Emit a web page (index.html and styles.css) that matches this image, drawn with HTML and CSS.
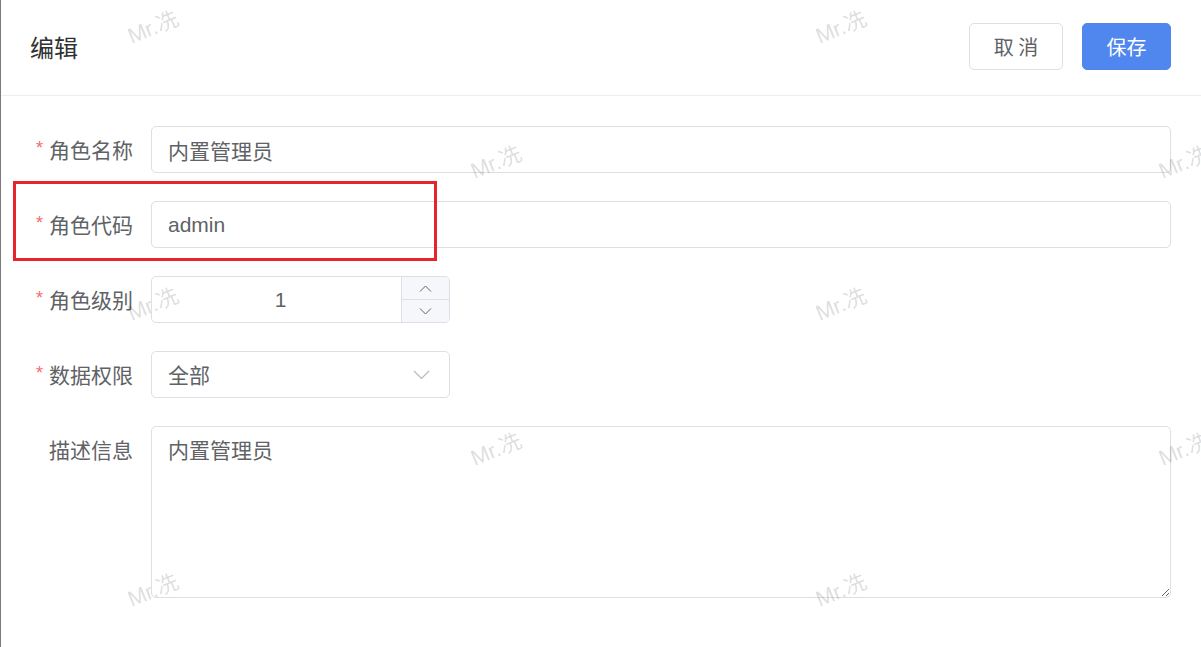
FILE: index.html
```html
<!DOCTYPE html>
<html lang="zh-CN">
<head>
<meta charset="utf-8">
<title>编辑</title>
<link rel="stylesheet" href="styles.css">
</head>
<body>
<div class="dialog">
  <div class="header">
    <div class="title">编辑</div>
    <div class="actions">
      <button class="btn btn-default">取 消</button>
      <button class="btn btn-primary">保存</button>
    </div>
  </div>
  <form class="form">
    <div class="row">
      <label class="label"><span class="req">*</span>角色名称</label>
      <div class="control"><input class="input" type="text" value="内置管理员"></div>
    </div>
    <div class="row">
      <label class="label"><span class="req">*</span>角色代码</label>
      <div class="control"><input class="input" type="text" value="admin"></div>
    </div>
    <div class="row">
      <label class="label"><span class="req">*</span>角色级别</label>
      <div class="control">
        <div class="number">
          <div class="number-value">1</div>
          <div class="stepper">
            <span class="step step-up">
              <svg width="13" height="7" viewBox="0 0 13 7"><path d="M1 6.5 L6.5 1 L12 6.5" fill="none" stroke="#606266" stroke-width="1"/></svg>
            </span>
            <span class="step step-down">
              <svg width="13" height="7" viewBox="0 0 13 7"><path d="M1 0.5 L6.5 6 L12 0.5" fill="none" stroke="#606266" stroke-width="1"/></svg>
            </span>
          </div>
        </div>
      </div>
    </div>
    <div class="row">
      <label class="label"><span class="req">*</span>数据权限</label>
      <div class="control">
        <div class="select">
          <span class="select-value">全部</span>
          <svg class="select-arrow" width="17" height="10" viewBox="0 0 17 10"><path d="M1 1 L8.5 8.5 L16 1" fill="none" stroke="#b4b8bf" stroke-width="1.2"/></svg>
        </div>
      </div>
    </div>
    <div class="row row-top">
      <label class="label">描述信息</label>
      <div class="control"><textarea class="textarea">内置管理员</textarea></div>
    </div>
  </form>

  <div class="mark-box"></div>

  <div class="watermarks">
    <span class="wm wm1">Mr.冼</span>
    <span class="wm wm2">Mr.冼</span>
    <span class="wm wm3">Mr.冼</span>
    <span class="wm wm4">Mr.冼</span>
    <span class="wm wm5">Mr.冼</span>
    <span class="wm wm6">Mr.冼</span>
    <span class="wm wm7">Mr.冼</span>
    <span class="wm wm8">Mr.冼</span>
    <span class="wm wm9">Mr.冼</span>
    <span class="wm wm10">Mr.冼</span>
  </div>
</div>
</body>
</html>
```

FILE: styles.css
```css
* { box-sizing: border-box; }
html, body {
  margin: 0;
  padding: 0;
  background: #fff;
}
body {
  font-family: "Noto Sans CJK SC", "Liberation Sans", sans-serif;
  color: #606266;
  overflow: hidden;
}
.dialog {
  position: relative;
  width: 1201px;
  height: 647px;
  border-left: 1px solid #7a7a7a;
  background: #fff;
}
.header {
  height: 96px;
  border-bottom: 1px solid #ebeef5;
  display: flex;
  align-items: center;
  justify-content: space-between;
  padding: 0 30px 0 29px;
}
.title {
  font-size: 24px;
  color: #303133;
  line-height: 1;
  margin-top: -2px;
}
.actions {
  display: flex;
  gap: 19px;
  margin-top: -2px;
}
.btn {
  height: 47px;
  border-radius: 5px;
  font-family: "Noto Sans CJK SC", sans-serif;
  font-size: 20px;
  line-height: 1;
  padding: 0;
  cursor: pointer;
}
.btn-default {
  width: 94px;
  background: #fff;
  border: 1px solid #dcdfe6;
  color: #606266;
}
.btn-primary {
  width: 89px;
  background: #4f87ef;
  border: 1px solid #4f87ef;
  color: #fff;
}
.form {
  padding: 30px 30px 0 0;
  display: flex;
  flex-direction: column;
  gap: 28px;
}
.row {
  display: flex;
  align-items: center;
  gap: 18px;
  height: 47px;
}
.row-top {
  align-items: flex-start;
  height: 172px;
}
.label {
  width: 132px;
  height: 47px;
  flex: none;
  display: flex;
  align-items: center;
  justify-content: flex-end;
  font-size: 21px;
  line-height: 1;
  color: #606266;
  white-space: nowrap;
}
.req {
  color: #f56c6c;
  margin-right: 6px;
  font-size: 18px;
  line-height: 1;
  font-family: "Liberation Sans", sans-serif;
  align-self: center;
  margin-top: -3px;
}
.control {
  flex: 1;
  min-width: 0;
}
.input {
  display: block;
  width: 100%;
  height: 47px;
  border: 1px solid #dcdfe6;
  border-radius: 5px;
  padding: 0 16px;
  font-family: "Liberation Sans", "Noto Sans CJK SC", sans-serif;
  font-size: 21px;
  color: #606266;
  outline: none;
  background: #fff;
}
.number {
  width: 299px;
  height: 47px;
  border: 1px solid #dcdfe6;
  border-radius: 5px;
  display: flex;
  overflow: hidden;
}
.number-value {
  flex: 1;
  text-align: center;
  padding-left: 8px;
  font-family: "Liberation Sans", sans-serif;
  font-size: 21px;
  line-height: 45px;
  color: #606266;
}
.stepper {
  width: 48px;
  flex: none;
  display: flex;
  flex-direction: column;
  background: #f5f7fa;
  border-left: 1px solid #dcdfe6;
}
.step {
  flex: 1;
  display: flex;
  align-items: center;
  justify-content: center;
}
.step-up {
  border-bottom: 1px solid #dcdfe6;
}
.select {
  width: 299px;
  height: 47px;
  border: 1px solid #dcdfe6;
  border-radius: 5px;
  display: flex;
  align-items: center;
  justify-content: space-between;
  padding: 0 19px 0 16px;
  font-size: 21px;
  color: #606266;
}
.select-value {
  line-height: 1;
}
.textarea {
  display: block;
  width: 100%;
  height: 172px;
  border: 1px solid #dcdfe6;
  border-radius: 5px;
  padding: 7px 16px;
  font-family: "Noto Sans CJK SC", sans-serif;
  font-size: 21px;
  line-height: 30px;
  color: #606266;
  resize: vertical;
  outline: none;
}
.mark-box {
  position: absolute;
  left: 12px;
  top: 181px;
  width: 424px;
  height: 80px;
  border: 3px solid #e8242b;
  pointer-events: none;
}
.watermarks {
  position: absolute;
  inset: 0;
  pointer-events: none;
  overflow: hidden;
}
.wm {
  position: absolute;
  font-family: "Liberation Sans", "Noto Sans CJK SC", sans-serif;
  font-size: 22px;
  font-weight: normal;
  color: rgba(0, 0, 0, 0.15);
  transform: translate(-50%, -50%) rotate(-22deg);
  white-space: nowrap;
}
.wm1 { left: 151px; top: 25px; }
.wm2 { left: 839px; top: 25px; }
.wm3 { left: 494px; top: 160px; }
.wm4 { left: 1182px; top: 160px; }
.wm5 { left: 151px; top: 302px; }
.wm6 { left: 839px; top: 302px; }
.wm7 { left: 494px; top: 447px; }
.wm8 { left: 1182px; top: 447px; }
.wm9 { left: 151px; top: 588px; }
.wm10 { left: 839px; top: 588px; }
```
